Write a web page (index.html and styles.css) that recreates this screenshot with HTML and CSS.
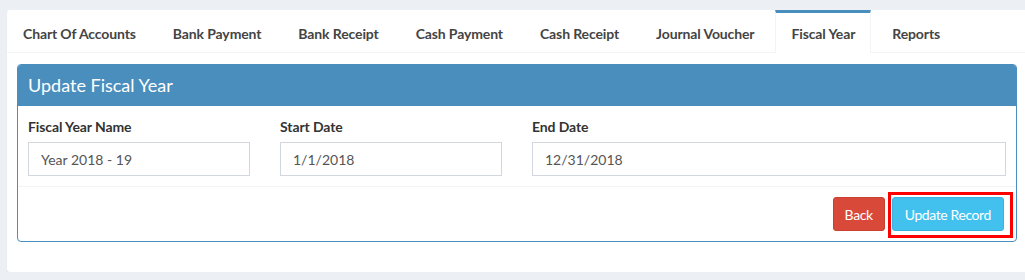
FILE: index.html
```html
<!doctype html>
<html lang="en">
  <head>
    <meta charset="utf-8">
    <title>Update Fiscal Year</title>
    <link rel="stylesheet" href="styles.css">
  </head>
  <body>
    <div class="nav-tabs-custom">
      <ul class="nav-tabs">
        <li><a href="#">Chart Of Accounts</a></li>
        <li><a href="#">Bank Payment</a></li>
        <li><a href="#">Bank Receipt</a></li>
        <li><a href="#">Cash Payment</a></li>
        <li><a href="#">Cash Receipt</a></li>
        <li><a href="#">Journal Voucher</a></li>
        <li class="active"><a href="#">Fiscal Year</a></li>
        <li><a href="#">Reports</a></li>
      </ul>

      <div class="tab-content">
        <div class="panel">
          <div class="panel-heading">Update Fiscal Year</div>
          <div class="panel-body">
            <div class="form-group">
              <label>Fiscal Year Name</label>
              <input class="form-control" type="text" value="Year 2018 - 19">
            </div>
            <div class="form-group">
              <label>Start Date</label>
              <input class="form-control" type="text" value="1/1/2018">
            </div>
            <div class="form-group">
              <label>End Date</label>
              <input class="form-control" type="text" value="12/31/2018">
            </div>
          </div>
          <div class="panel-footer">
            <button class="btn btn-danger">Back</button>
            <!-- highlighted in the screenshot -->
            <span class="highlight"><button class="btn btn-info">Update Record</button></span>
          </div>
        </div>
      </div>
    </div>
  </body>
</html>
```

FILE: styles.css
```css
* {
  box-sizing: border-box;
}

body {
  margin: 0;
  padding: 10px 0 0 7px;
  background: #ecf0f5;
  font-family: Lato, 'Open Sans', sans-serif;
  font-size: 14px;
  color: #333;
  overflow: hidden;
}

/* Outer tab box */
.nav-tabs-custom {
  width: 1020px;
  height: 262px;
  background: #fff;
  border-radius: 3px;
  box-shadow: 0 1px 1px rgba(0, 0, 0, .12);
}

.nav-tabs {
  display: flex;
  list-style: none;
  margin: 0;
  padding: 0;
  border-bottom: 1px solid #f4f4f4;
}
.nav-tabs li {
  margin-right: 5px;
  margin-bottom: -1px;
  border-top: 3px solid transparent;
  border-left: 1px solid transparent;
  border-right: 1px solid transparent;
}
.nav-tabs li a {
  display: block;
  padding: 11px 15px 9px;
  line-height: 20px;
  font-weight: bold;
  letter-spacing: -0.12px;
  color: #444;
  text-decoration: none;
}
.nav-tabs li.active {
  border-top-color: #4a8ebd;
  border-left-color: #f4f4f4;
  border-right-color: #f4f4f4;
  background: #fff;
}

.tab-content {
  padding: 11px 10px 10px;
}

/* Panel */
.panel {
  border: 1px solid #4a8ebd;
  border-radius: 4px;
  background: #fff;
}
.panel-heading {
  height: 41px;
  padding: 9px 10px;
  background: #4a8ebd;
  color: #fff;
  font-size: 18px;
  line-height: 22px;
  border-radius: 3px 3px 0 0;
}
.panel-body {
  display: grid;
  grid-template-columns: 222px 222px 1fr;
  column-gap: 30px;
  padding: 11px 10px 10px;
}
.form-group label {
  display: block;
  margin-bottom: 5px;
  font-weight: bold;
  line-height: 20px;
  letter-spacing: -0.1px;
}
.form-control {
  display: block;
  width: 100%;
  height: 34px;
  padding: 6px 12px;
  border: 1px solid #d2d6de;
  font: inherit;
  color: #555;
}
.panel-footer {
  display: flex;
  justify-content: flex-end;
  gap: 7px;
  padding: 10px 12px 10px 10px;
  border-top: 1px solid #f4f4f4;
}

/* Buttons */
.btn {
  height: 34px;
  padding: 6px 12px;
  border: 1px solid transparent;
  border-radius: 3px;
  font: inherit;
  letter-spacing: -0.4px;
  color: #fff;
}
.btn-danger {
  padding: 6px 11px;
  background: #d9493a;
  border-color: #c9402f;
}
.btn-info {
  background: #43c1ee;
  border-color: #3bb2dd;
}
.highlight {
  position: relative;
  display: inline-block;
}
.highlight::after {
  content: '';
  position: absolute;
  top: -5px;
  left: -4px;
  right: -9px;
  bottom: -7px;
  border: 3px solid #f00;
}
```
